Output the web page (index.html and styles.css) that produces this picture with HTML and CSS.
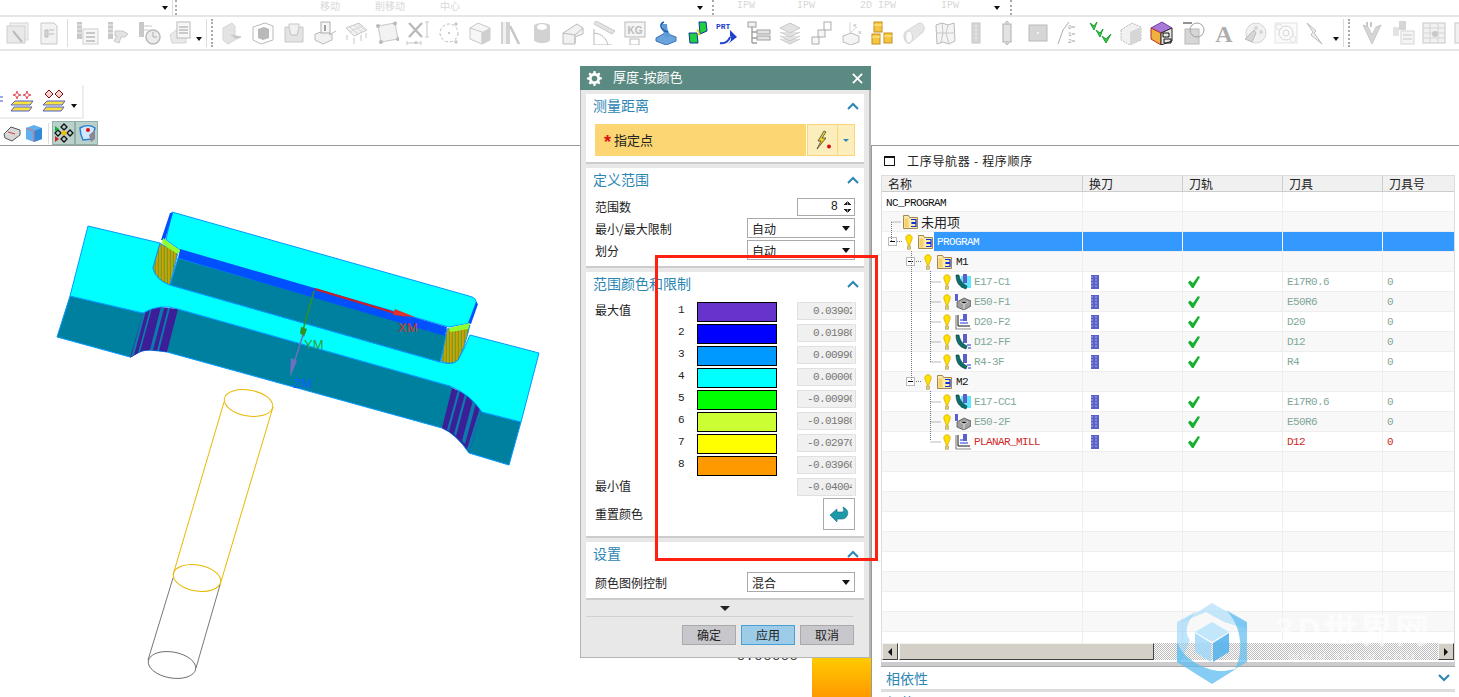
FILE: index.html
```html
<!DOCTYPE html>
<html lang="zh">
<head>
<meta charset="utf-8">
<title>厚度-按颜色</title>
<link rel="stylesheet" href="styles.css">
</head>
<body>
<svg class="defs" width="0" height="0">
  <symbol id="bulb" viewBox="0 0 10 20"><path d="M5 1C2.200 1 1 3 1 5c0 3 2.500 5 3 9h2c.5-4 3-6 3-9 0-2-1.200-4-4-4z" fill="#ffe000" stroke="#d8ac00"/><rect x="3" y="15" width="4" height="4" fill="#e8d060" stroke="#a09a70" stroke-width=".8"/></symbol>
  <symbol id="folder" viewBox="0 0 15 15"><path d="M.5 3.500V1.500h5l1 2h8v11H.5z" fill="#fbeaa8" stroke="#a08850"/><rect x="1.500" y="4.500" width="4" height="9" fill="#f4d070"/><path d="M8 5.500h5v3H9v1h4v3H8" fill="none" stroke="#1030e0" stroke-width="1.200"/></symbol>
  <symbol id="chip" viewBox="0 0 8 14"><rect width="8" height="14" fill="#5a60c8"/><path d="M0 2h8M0 5h8M0 8h8M0 11h8" stroke="#a8b0f0" stroke-dasharray="2 2"/></symbol>
  <symbol id="check" viewBox="0 0 12 12"><path d="M0 6.500l2-2 3 2.500L10 0l2 1-6.500 11h-1.500z" fill="#18b030"/></symbol>
  <symbol id="op-contour" viewBox="0 0 16 16"><path d="M1 1c0 7 3 12 10 14l1-3C8 10 5 7 4 1z" fill="#0a7068" stroke="#063a38" stroke-width=".6"/><rect x="8" y="0" width="4" height="9" fill="#5a60c8"/><path d="M12 11h4M13 14h3" stroke="#1030e0"/></symbol>
  <symbol id="op-contour2" viewBox="0 0 16 16"><rect x="6" y="2" width="10" height="12" fill="#60e8ff"/><path d="M1 1c0 7 3 12 10 14l1-3C8 10 5 7 4 1z" fill="#0a7068" stroke="#063a38" stroke-width=".6"/><rect x="8" y="0" width="4" height="9" fill="#5a60c8"/></symbol>
  <symbol id="op-cavity" viewBox="0 0 16 16"><rect x="0" y="0" width="3" height="7" fill="#5a60c8"/><path d="M2 8l7-4 7 3v5l-7 4-7-3z" fill="#a0a0a0" stroke="#404040" stroke-width=".7"/><path d="M5 8l4 2 4-2M9 10v5" stroke="#e0e0e0"/></symbol>
  <symbol id="op-planar" viewBox="0 0 16 16"><path d="M1 1v14h15" fill="none" stroke="#888" stroke-width="1.200"/><path d="M3 1v11h12" fill="none" stroke="#111"/><rect x="8" y="0" width="4" height="7" fill="#5a60c8"/><path d="M5 6h3M5 9h8" stroke="#1030e0"/></symbol>
  <symbol id="chev-up" viewBox="0 0 12 8"><path d="M1 7l5-5 5 5" fill="none" stroke="#2c86b4" stroke-width="2"/></symbol>
  <symbol id="chev-down" viewBox="0 0 12 8"><path d="M1 1l5 5 5-5" fill="none" stroke="#2c86b4" stroke-width="2"/></symbol>
</svg>

<header class="toolbars">
  <div class="row-top">
    <div class="top-seg top-a"><i class="drop"></i></div>
    <div class="top-seg top-b">
      <span class="faint w-move">移动</span><span class="faint w-cut">削移动</span><span class="faint w-center">中心</span><i class="drop"></i>
    </div>
    <div class="top-seg top-c">
      <span class="faint ipw w-ipw1">IPW</span><span class="faint ipw w-ipw2">IPW</span><span class="faint ipw w-ipw3">2D IPW</span><span class="faint ipw w-ipw4">IPW</span><i class="drop"></i>
    </div>
    <div class="top-seg top-d"></div>
  </div>
  <div class="row-main">
    <svg class="ti g" viewBox="0 0 24 24"><rect x="5" y="2" width="18" height="17" fill="#eee" stroke="#ccc"/><rect x="2" y="5" width="18" height="17" fill="#e4e4e4" stroke="#c4c4c4"/><path d="M8 10l9 11" stroke="#aaa" stroke-width="2"/></svg>
    <svg class="ti g" viewBox="0 0 24 24"><path d="M5 2h13l3 3v18H5z" fill="#f0f0f0" stroke="#bbb"/><path d="M9 9h3v7H9zM13 9h5M13 13h5" stroke="#aaa" fill="#ccc"/></svg>
    <i class="vsep"></i>
    <svg class="ti g" viewBox="0 0 24 24"><rect x="2" y="1" width="5" height="17" fill="#bbb"/><path d="M2 4h5M2 8h5M2 12h5" stroke="#eee"/><rect x="8" y="8" width="15" height="15" fill="#f4f4f4" stroke="#c4c4c4"/><path d="M11 12h9M11 16h9M11 20h9" stroke="#bbb" stroke-width="2"/></svg>
    <svg class="ti g" viewBox="0 0 24 24"><rect x="2" y="1" width="5" height="17" fill="#bbb"/><path d="M2 4h5M2 8h5M2 12h5" stroke="#eee"/><path d="M9 10h8l5 3-3 3h-4l-2 6-5-2 3-5H9z" fill="#ddd" stroke="#bbb"/></svg>
    <svg class="ti g" viewBox="0 0 24 24"><rect x="2" y="1" width="5" height="15" fill="#bbb"/><path d="M7 5h8M7 9h5" stroke="#bbb"/><circle cx="16" cy="16" r="7" fill="#e8e8e8" stroke="#aaa" stroke-width="1.500"/><path d="M16 11v5h4" stroke="#999" fill="none"/></svg>
    <svg class="ti g" viewBox="0 0 24 24"><path d="M2 14l6-5 10 5v8H4z" fill="#e4e4e4" stroke="#ccc"/><rect x="9" y="1" width="13" height="16" fill="#f6f6f6" stroke="#aaa"/><path d="M11 6h9M11 9h9M11 12h9" stroke="#aaa" stroke-width="1.400"/></svg>
    <i class="drop tool-drop"></i><i class="vsep vsep-b"></i><i class="grip grip-b"></i>
    <svg class="ti g" viewBox="0 0 24 24"><path d="M3 7l9-5 3 3v14l-7 4-5-4z" fill="#ddd" stroke="#ccc"/><path d="M11 14l10 2-5 2" fill="#bbb" stroke="#bbb"/></svg>
    <svg class="ti g" viewBox="0 0 24 24"><path d="M2 6l12-4 8 3v14l-12 4-8-4z" fill="none" stroke="#aaa"/><path d="M7 8l6-2 5 2v9l-6 2-5-2z" fill="#a8a8a8"/></svg>
    <svg class="ti g" viewBox="0 0 24 24"><path d="M3 6h4l2 8h6l2-8h4v15H3z" fill="#ddd" stroke="#bbb"/><path d="M7 3h10v3l-2 8H9L7 6z" fill="#eee" stroke="#bbb"/></svg>
    <svg class="ti g" viewBox="0 0 24 24"><path d="M2 13l9-3 8 3v6l-9 4-8-4z" fill="#eee" stroke="#aaa"/><rect x="8" y="1" width="9" height="11" fill="#f4f4f4" stroke="#999"/><path d="M12 4v6" stroke="#888" stroke-width="2"/><path d="M16 14l7-4" stroke="#aaa"/></svg>
    <svg class="ti g" viewBox="0 0 24 24"><path d="M2 7l13-5 8 7-13 6z" fill="#eee" stroke="#bbb"/><path d="M6 6l8 7M10 4l8 7M14 3l6 6M5 11l13-6" stroke="#ccc"/><path d="M3 14v5M10 17v6M17 14v6M22 12v5" stroke="#bbb"/></svg>
    <svg class="ti g" viewBox="0 0 24 24"><path d="M3 5l17-3 3 16-17 3z" fill="#f0f0f0" stroke="#bbb"/><circle cx="3" cy="5" r="2" fill="#aaa"/><circle cx="20" cy="2.500" r="2" fill="#aaa"/><circle cx="23" cy="18" r="2" fill="#aaa"/><circle cx="6" cy="21" r="2" fill="#aaa"/></svg>
    <svg class="ti g" viewBox="0 0 24 24"><path d="M3 2l13 14M16 2L3 16" stroke="#aaa" stroke-width="2.400"/><path d="M19 1h4M21 1v15M19 16h4M1 20v4M15 20v4M1 22h14" stroke="#bbb"/><text x="8" y="23" class="svg-small">x</text></svg>
    <svg class="ti g" viewBox="0 0 24 24"><circle cx="12" cy="12" r="9" fill="none" stroke="#aaa" stroke-dasharray="3 2"/><circle cx="12" cy="12" r="1" fill="#aaa"/><path d="M19 1v4M17 3h4M19 19v4M17 21h4" stroke="#aaa"/></svg>
    <svg class="ti g" viewBox="0 0 24 24"><path d="M2 7l8-5 12 5v12l-8 4-12-5z" fill="#f4f4f4" stroke="#bbb"/><path d="M14 11l8-4v12l-8 4z" fill="#c4c4c4"/><path d="M2 7l12 4v12" fill="none" stroke="#bbb"/></svg>
    <svg class="ti g" viewBox="0 0 24 24"><rect x="2" y="1" width="9" height="22" fill="#c8c8c8"/><rect x="4" y="1" width="3" height="22" fill="#eee"/><path d="M11 5l9 18" stroke="#bbb" stroke-width="2.500"/></svg>
    <svg class="ti g" viewBox="0 0 24 24"><path d="M4 5c0-4 16-4 16 0v14c0 4-16 4-16 0z" fill="#c8c8c8"/><ellipse cx="12" cy="6" rx="5" ry="3" fill="#fff"/></svg>
    <svg class="ti g" viewBox="0 0 24 24"><path d="M2 12l14-9 6 4v6l-8 3v7H2z" fill="#eee" stroke="#aaa"/><path d="M2 12l12 2v8M14 14l8-7" fill="none" stroke="#aaa"/></svg>
    <svg class="ti g" viewBox="0 0 24 24"><path d="M4 0l19 10-3 3L2 3z" fill="#ddd" stroke="#bbb"/><path d="M2 8v16h18M2 12c8 1 12 5 14 12" fill="none" stroke="#aaa"/></svg>
    <svg class="ti g" viewBox="0 0 24 24"><rect x="2" y="1" width="20" height="15" fill="#f2f2f2" stroke="#aaa"/><text x="12" y="13" class="svg-kg">KG</text><rect x="7" y="18" width="9" height="6" fill="none" stroke="#aaa"/></svg>
    <svg class="ti" viewBox="0 0 24 24"><path d="M2 17l9-5 11 4v4l-10 4-10-4z" fill="#6aa4dc" stroke="#3b70b8"/><path d="M8 3c0 6 2 9 4 14l5-3c-3-3-4-6-4-11z" fill="#5c9bd8"/><path d="M10 1C5 3 6 9 14 11" fill="none" stroke="#1c5cb0" stroke-width="1.600"/></svg>
    <svg class="ti" viewBox="0 0 24 24"><path d="M14 1h7l1 9-7 3z" fill="#20d040" stroke="#1030a0"/><path d="M4 12h8l1 10H5z" fill="#20d040" stroke="#1030a0"/><path d="M13 12l2 2M12 9l2 1" stroke="#e0e000" stroke-width="2"/></svg>
    <svg class="ti" viewBox="0 0 24 24"><text x="0" y="8" class="svg-prt">PRT</text><path d="M14 9l7 7-9 7c3-3 4-5 2-8z" fill="#2040d0"/><path d="M4 22c5 1 9-2 10-6" fill="none" stroke="#2040d0" stroke-width="2"/></svg>
    <svg class="ti g" viewBox="0 0 24 24"><rect x="1" y="1" width="8" height="5" fill="#eee" stroke="#888"/><path d="M5 6v16M5 11h5M5 17h5M5 22h5" stroke="#888" stroke-width="1.400"/><rect x="10" y="9" width="13" height="4" fill="#ddd" stroke="#888"/><rect x="10" y="15" width="13" height="4" fill="#ddd" stroke="#888"/></svg>
    <svg class="ti g" viewBox="0 0 24 24"><path d="M2 7l10-5 10 5-10 5zM2 11l10 5 10-5M2 15l10 5 10-5M2 18l10 5 10-5" fill="#ddd" stroke="#bbb"/></svg>
    <svg class="ti g" viewBox="0 0 24 24"><rect x="15" y="1" width="7" height="8" fill="#fff" stroke="#999"/><rect x="9" y="9" width="7" height="7" fill="#f4f4f4" stroke="#999"/><rect x="3" y="16" width="7" height="7" fill="#f4f4f4" stroke="#999"/></svg>
    <svg class="ti g" viewBox="0 0 24 24"><path d="M3 15l8-3 8 3v6l-8 3-8-3z" fill="#f2f2f2" stroke="#aaa"/><path d="M10 1v11l7-6" stroke="#ccc" fill="none"/><text x="13" y="6" class="svg-small">x</text><text x="18" y="13" class="svg-small">x</text></svg>
    <svg class="ti" viewBox="0 0 24 24"><rect x="3" y="1" width="8" height="10" fill="#f6c640" stroke="#c09020"/><rect x="1" y="13" width="8" height="10" fill="#f6c640" stroke="#c09020"/><rect x="13" y="12" width="8" height="10" fill="#f6c640" stroke="#c09020"/><path d="M3 4h8M1 16h8M13 15h8" stroke="#fff0a0"/></svg>
    <svg class="ti g" viewBox="0 0 24 24"><path d="M3 11L17 2c4-1 7 5 4 9L8 22c-4 2-8-6-5-11z" fill="#e0e0e0" stroke="#ccc"/><ellipse cx="7" cy="16" rx="3.500" ry="6" fill="#fafafa" stroke="#ccc"/></svg>
    <svg class="ti g" viewBox="0 0 24 24"><path d="M3 4l6-2 6 2 6-2 1 18-6 3-6-2-6 2z" fill="#f2f2f2" stroke="#aaa"/><path d="M9 2l1 10-2 9M15 4l-2 8 3 11M3 12h19" fill="none" stroke="#bbb"/></svg>
    <svg class="ti g" viewBox="0 0 24 24"><rect x="8" y="2" width="8" height="20" fill="#ccc" stroke="#bbb"/><path d="M12 4v16" stroke="#eee" stroke-dasharray="2 2"/></svg>
    <svg class="ti g" viewBox="0 0 24 24"><rect x="8" y="3" width="8" height="18" fill="#ddd" stroke="#999"/><path d="M12 0v3M12 21v3M10 2l2-2 2 2M10 22l2 2 2-2" fill="none" stroke="#aaa"/></svg>
    <svg class="ti g" viewBox="0 0 24 24"><rect x="3" y="4" width="18" height="16" fill="#ccc" stroke="#aaa"/><circle cx="12" cy="12" r="1" fill="#fff"/></svg>
    <svg class="ti g" viewBox="0 0 24 24"><path d="M1 23l5-14 6-8" fill="none" stroke="#999"/><text x="11" y="8" class="svg-small">0=</text><text x="11" y="15" class="svg-small">1=</text><text x="11" y="22" class="svg-small">2=</text></svg>
    <svg class="ti" viewBox="0 0 24 24"><path d="M2 2l4 7 3-8-3 4zM8 9l4 7 3-8-3 4zM14 15l4 7 5-9-5 5z" fill="#38c848" stroke="#20a030"/></svg>
    <svg class="ti g" viewBox="0 0 24 24"><path d="M2 9l11-7 9 4v13l-11 5-9-5z" fill="#eee" stroke="#aaa" stroke-dasharray="2 1"/><path d="M11 11l11-5v13l-11 5z" fill="#ccc"/></svg>
    <svg class="ti" viewBox="0 0 24 24"><path d="M1 7l11-6 10 6-11 5z" fill="#a878d8" stroke="#7040a0"/><path d="M1 7l10 5v12L1 18z" fill="#f0b040" stroke="#c02820"/><path d="M11 12l11-5v13l-11 4z" fill="#e8e8e8" stroke="#222"/><path d="M13 12h6v4h-6zM14 18h7v4h-7z" fill="none" stroke="#111"/></svg>
    <svg class="ti g" viewBox="0 0 24 24"><rect x="4" y="8" width="14" height="15" fill="#ccc" stroke="#aaa"/><circle cx="16" cy="9" r="7" fill="none" stroke="#888"/><path d="M2 2h9" stroke="#777" stroke-width="2"/></svg>
    <svg class="ti g" viewBox="0 0 24 24"><text x="12" y="21" class="svg-a">A</text></svg>
    <svg class="ti g" viewBox="0 0 24 24"><circle cx="13" cy="12" r="10" fill="#eee" stroke="#ccc"/><circle cx="13" cy="7" r="2" fill="#ccc"/><circle cx="18" cy="11" r="2" fill="#ccc"/><path d="M2 18l9-9 2 3-4 9z" fill="#ccc" stroke="#aaa"/></svg>
    <svg class="ti g" viewBox="0 0 24 24"><rect x="1" y="2" width="22" height="20" fill="#fafafa" stroke="#ddd"/><circle cx="12" cy="12" r="7" fill="none" stroke="#ccc"/><circle cx="12" cy="12" r="3" fill="none" stroke="#ccc"/><circle cx="5" cy="6" r="3" fill="none" stroke="#ddd"/><circle cx="19" cy="18" r="3" fill="none" stroke="#ddd"/></svg>
    <svg class="ti g" viewBox="0 0 24 24"><path d="M2 2l9 8-2 2 8 11-11-9 2-3z" fill="#eee" stroke="#aaa"/></svg>
    <i class="drop tool-drop"></i><i class="vsep vsep-c"></i><i class="grip grip-c"></i>
    <svg class="ti g" viewBox="0 0 24 24"><path d="M3 4l9 19 9-19-5 2-4 8-4-8z" fill="#ccc" stroke="#bbb"/><path d="M7 1v5M11 1v5" stroke="#bbb" stroke-width="2"/></svg>
    <svg class="ti g" viewBox="0 0 24 24"><rect x="8" y="0" width="7" height="9" fill="#ccc"/><rect x="2" y="6" width="6" height="9" fill="#ddd"/><rect x="10" y="10" width="13" height="13" fill="#f2f2f2" stroke="#ccc"/><path d="M12 14h9M12 18h9" stroke="#bbb"/></svg>
    <svg class="ti g" viewBox="0 0 24 24"><rect x="1" y="2" width="22" height="20" fill="#eee" stroke="#bbb"/><path d="M1 7h22M1 12h22M1 17h22M8 2v20M16 2v20" stroke="#ccc"/><circle cx="13" cy="13" r="3" fill="#bbb"/></svg>
    <svg class="ti g" viewBox="0 0 24 24"><rect x="2" y="2" width="12" height="20" fill="#eee" stroke="#bbb"/></svg>
  </div>
  <div class="mini-bar">
    <svg class="mi mi-a" viewBox="0 0 3 24"><path d="M0 9h3M0 13h3" stroke="#4050d0"/></svg>
    <svg class="mi" viewBox="0 0 24 24"><path d="M7 3l1 3 3 1-3 1-1 3-1-3-3-1 3-1zM17 3l1 3 3 1-3 1-1 3-1-3-3-1 3-1z" fill="#fff" stroke="#e03040" stroke-width=".8"/><path d="M5 13h18l-3 4H1zM4 19h18l-3 4H1z" fill="#f8e040" stroke="#5060d0"/></svg>
    <svg class="mi" viewBox="0 0 24 24"><path d="M7 2l4 4-4 4-4-4zM17 2l4 4-4 4-4-4z" fill="#f4d0d0" stroke="#801010"/><path d="M5 13h18l-3 4H1zM4 19h18l-3 4H1z" fill="#f8e040" stroke="#5060d0"/></svg>
    <i class="drop mini-drop"></i>
  </div>
  <div class="view-bar">
    <svg class="vi" viewBox="0 0 20 20"><path d="M2 11l7-7 9 3v5l-8 6-7-3z" fill="#d8d8d8" stroke="#555"/><path d="M6 9l7 2" stroke="#d04040"/></svg>
    <svg class="vi" viewBox="0 0 20 20"><path d="M2 5l8-3 8 3v11l-8 3-8-3z" fill="#60b0f0"/><path d="M10 8l8-3v11l-8 3z" fill="#3088d8"/><path d="M2 5l8 3v11" fill="none" stroke="#e07070"/></svg>
    <i class="vsep vsep-v"></i>
    <span class="toggle"><svg class="vi" viewBox="0 0 20 20"><path d="M10 1l3 3-3 3-3-3zM10 13l3 3-3 3-3-3zM4 7l3 3-3 3-3-3zM16 7l3 3-3 3-3-3z" fill="none" stroke="#111" stroke-width="1.300"/><path d="M10 7l3 3-3 3-3-3z" fill="#f0c000"/><path d="M1 3l4 3-4 3z" fill="#10b040"/><path d="M1 13l4 3-4 3z" fill="#d02020"/></svg></span>
    <span class="toggle"><svg class="vi" viewBox="0 0 20 20"><path d="M3 5c5-3 11-3 15 0l-3 11-9 1C4 13 3 9 3 5z" fill="#d0e8ff" stroke="#3080d0" stroke-width="1.500"/><circle cx="11" cy="7" r="2" fill="#e01010"/><path d="M12 12l6-5v9l-4 3z" fill="#889"/></svg></span>
  </div>
</header>

<div class="workspace">
  <main class="viewport">
    <svg class="model" viewBox="0 146 871 551" width="871" height="551">
      <defs>
        <linearGradient id="legend" x1="0" y1="0" x2="0" y2="1"><stop offset="0" stop-color="#ffcc00"/><stop offset="1" stop-color="#ff9900"/></linearGradient>
        <pattern id="stipple" width="3" height="3" patternUnits="userSpaceOnUse"><rect width="3" height="3" fill="#b8a010"/><rect width="1" height="3" fill="#d0a000"/><rect x="2" width="1" height="3" fill="#70a020"/></pattern>
      </defs>
      <text x="737" y="660" class="legend-num">8.88888</text>
      <rect x="812" y="657" width="59" height="40" fill="url(#legend)"/>
      <g fill="none">
        <g stroke="#e8b800" stroke-width="1">
          <ellipse cx="248.500" cy="403" rx="24.500" ry="13" transform="rotate(10 248.500 403)"/>
          <ellipse cx="197" cy="578" rx="24" ry="13" transform="rotate(10 197 578)"/>
          <path d="M224 402L173 575M273 407L220 585"/>
        </g>
        <g stroke="#555" stroke-width=".8">
          <path d="M173 578L148 660M220 585L196 668"/>
          <ellipse cx="172" cy="665" rx="24" ry="13" transform="rotate(10 172 665)"/>
        </g>
      </g>
      <path d="M70 296L57 337L130 357Q140 350 150 350L167 352L442 428Q456 434 469 453L509 465L521 422L482 412L450 386L178 309L143 313Z" fill="#00809f" stroke="#0099ff"/>
      <path d="M143 313Q150 307 160 307L178 309L167 352Q150 349 142 351L130 358Z" fill="#3c1f98"/>
      <path d="M143 313L146 311L134 355L131 357ZM150 309L152 308L140 352L138 353ZM161 307L164 308L153 350L150 350ZM168 308L170 308L159 351L157 351Z" fill="#0a7cac"/>
      <path d="M452 388Q470 394 482 410L469 452Q456 434 442 428Z" fill="#3c1f98"/>
      <path d="M458 390L460 391L449 431L447 430ZM465 394L467 395L456 436L454 434ZM473 400L476 403L465 444L462 441ZM480 408L482 410L469 452L467 449Z" fill="#0a7cac"/>
      <path d="M88 226L160 243L153 268Q156 280 170 285L440 362Q452 366 458 360Q464 350 470 335L539 353L521 422L482 412Q470 394 450 386L178 309Q160 303 143 313L70 296Z" fill="#00ffff" stroke="#0099ff"/>
      <path d="M178 258L447 335L440 362L170 285Z" fill="#00809f" stroke="#0099ff"/>
      <path d="M160 243L153 268Q156 280 170 285L178 252L163 245Z" fill="url(#stipple)" stroke="#0099ff"/>
      <path d="M447 329L441 361Q452 366 458 360Q464 350 470 325Z" fill="url(#stipple)" stroke="#0099ff"/>
      <path d="M172 212L469 296Q478 298 476 305L470 323L449 327L180 250L166 240Z" fill="#00ffff" stroke="#0099ff"/>
      <path d="M180 249L447 327L445 336L178 258Z" fill="#0050ff"/>
      <path d="M170 213L173 213L165 240L161 240Z" fill="#0050ff"/>
      <path d="M476 302L478 304L471 324L468 323Z" fill="#0050ff"/>
      <path d="M163 238L172 245L180 250L178 254L168 248L162 243Z" fill="#90ff30"/>
      <path d="M449 328L470 323L468 329L450 332Z" fill="#90ff30"/>
      <path d="M315 289L405 316" stroke="#cc2020" stroke-width="2"/>
      <path d="M395 309L415 317L393 315Z" fill="#e03030"/>
      <path d="M314 291L303 330" stroke="#309020" stroke-width="1.500"/>
      <path d="M301 327L307 329L304 337L300 333Z" fill="#309020"/>
      <path d="M303 335L295 360" stroke="#7070b8" stroke-width="1.500"/>
      <path d="M291 358L297 361L290 377Z" fill="#7070c0"/>
      <text x="398" y="332" class="axis axis-x">XM</text>
      <text x="304" y="349" class="axis axis-y">YM</text>
      <text x="293" y="388" class="axis axis-z">ZM</text>
    </svg>
  </main>

  <aside class="nav">
    <div class="nav-head">
      <i class="win-box"></i><span class="nav-title">工序导航器 - 程序顺序</span>
    </div>
    <div class="table">
      <div class="tr th"><span>名称</span><span>换刀</span><span>刀轨</span><span>刀具</span><span>刀具号</span></div>
      <div class="tr"><span class="name mono lvl0 dark">NC_PROGRAM</span><span></span><span></span><span></span><span></span></div>
      <div class="tr alt"><span class="name lvl-unused"><svg class="fd"><use href="#folder"/></svg><span class="cjk">未用项</span></span><span></span><span></span><span></span><span></span></div>
      <div class="tr sel"><span class="name lvl-program"><i class="tog"></i><svg class="bl"><use href="#bulb"/></svg><svg class="fd"><use href="#folder"/></svg><span class="mono sel-label">PROGRAM</span></span><span></span><span></span><span></span><span></span></div>
      <div class="tr alt"><span class="name lvl-group"><i class="tog"></i><svg class="bl"><use href="#bulb"/></svg><svg class="fd"><use href="#folder"/></svg><span class="mono dark">M1</span></span><span></span><span></span><span></span><span></span></div>
      <div class="tr"><span class="name lvl-op"><svg class="bl"><use href="#bulb"/></svg><svg class="op"><use href="#op-contour2"/></svg><span class="mono ok">E17-C1</span></span><span><svg class="ch"><use href="#chip"/></svg></span><span><svg class="ck"><use href="#check"/></svg></span><span class="mono ok">E17R0.6</span><span class="mono ok">0</span></div>
      <div class="tr alt"><span class="name lvl-op"><svg class="bl"><use href="#bulb"/></svg><svg class="op"><use href="#op-cavity"/></svg><span class="mono ok">E50-F1</span></span><span><svg class="ch"><use href="#chip"/></svg></span><span><svg class="ck"><use href="#check"/></svg></span><span class="mono ok">E50R6</span><span class="mono ok">0</span></div>
      <div class="tr"><span class="name lvl-op"><svg class="bl"><use href="#bulb"/></svg><svg class="op"><use href="#op-planar"/></svg><span class="mono ok">D20-F2</span></span><span><svg class="ch"><use href="#chip"/></svg></span><span><svg class="ck"><use href="#check"/></svg></span><span class="mono ok">D20</span><span class="mono ok">0</span></div>
      <div class="tr alt"><span class="name lvl-op"><svg class="bl"><use href="#bulb"/></svg><svg class="op"><use href="#op-contour"/></svg><span class="mono ok">D12-FF</span></span><span><svg class="ch"><use href="#chip"/></svg></span><span><svg class="ck"><use href="#check"/></svg></span><span class="mono ok">D12</span><span class="mono ok">0</span></div>
      <div class="tr"><span class="name lvl-op"><svg class="bl"><use href="#bulb"/></svg><svg class="op"><use href="#op-contour"/></svg><span class="mono ok">R4-3F</span></span><span><svg class="ch"><use href="#chip"/></svg></span><span><svg class="ck"><use href="#check"/></svg></span><span class="mono ok">R4</span><span class="mono ok">0</span></div>
      <div class="tr alt"><span class="name lvl-group"><i class="tog"></i><svg class="bl"><use href="#bulb"/></svg><svg class="fd"><use href="#folder"/></svg><span class="mono dark">M2</span></span><span></span><span></span><span></span><span></span></div>
      <div class="tr"><span class="name lvl-op"><svg class="bl"><use href="#bulb"/></svg><svg class="op"><use href="#op-contour2"/></svg><span class="mono ok">E17-CC1</span></span><span><svg class="ch"><use href="#chip"/></svg></span><span><svg class="ck"><use href="#check"/></svg></span><span class="mono ok">E17R0.6</span><span class="mono ok">0</span></div>
      <div class="tr alt"><span class="name lvl-op"><svg class="bl"><use href="#bulb"/></svg><svg class="op"><use href="#op-cavity"/></svg><span class="mono ok">E50-2F</span></span><span><svg class="ch"><use href="#chip"/></svg></span><span><svg class="ck"><use href="#check"/></svg></span><span class="mono ok">E50R6</span><span class="mono ok">0</span></div>
      <div class="tr"><span class="name lvl-op"><svg class="bl"><use href="#bulb"/></svg><svg class="op"><use href="#op-planar"/></svg><span class="mono bad">PLANAR_MILL</span></span><span><svg class="ch"><use href="#chip"/></svg></span><span><svg class="ck"><use href="#check"/></svg></span><span class="mono bad">D12</span><span class="mono bad">0</span></div>
      <div class="tr alt"><span></span><span></span><span></span><span></span><span></span></div>
      <div class="tr"><span></span><span></span><span></span><span></span><span></span></div>
      <div class="tr alt"><span></span><span></span><span></span><span></span><span></span></div>
      <div class="tr"><span></span><span></span><span></span><span></span><span></span></div>
      <div class="tr alt"><span></span><span></span><span></span><span></span><span></span></div>
      <div class="tr"><span></span><span></span><span></span><span></span><span></span></div>
      <div class="tr alt"><span></span><span></span><span></span><span></span><span></span></div>
      <div class="tr"><span></span><span></span><span></span><span></span><span></span></div>
      <div class="tr alt"><span></span><span></span><span></span><span></span><span></span></div>
      <div class="tr tr-fill"><span></span><span></span><span></span><span></span><span></span></div>
      <svg class="tree-lines" width="80" height="270" viewBox="881 176 80 270">
        <path d="M891.500 222V241M891.500 222H901M897 241.500H903M911.500 251V381M916 261.500H922M916 381.500H922M930.500 271V362M930.500 391V441M930.500 282H941M930.500 302H941M930.500 322H941M930.500 342H941M930.500 362H941M930.500 402H941M930.500 422H941M930.500 442H941" stroke="#777" stroke-dasharray="1 1" fill="none"/>
      </svg>
      <div class="hscroll">
        <span class="sb-btn"><i class="arrow-l"></i></span><span class="sb-thumb"></span><span class="sb-track"></span><span class="sb-btn"><i class="arrow-r"></i></span>
      </div>
    </div>
    <div class="nav-foot">
      <div class="fold"><span>相依性</span><svg class="chev"><use href="#chev-down"/></svg></div>
      <div class="fold fold-next"><span>细节</span></div>
    </div>
  </aside>
</div>

<section class="dialog">
  <div class="dlg-title">
    <svg class="gear" viewBox="0 0 16 16"><path d="M7 0h2l.4 2.200 1.500.6L12.800 1.600l1.500 1.500-1.200 1.900.6 1.500 2.200.4v2l-2.200.4-.6 1.500 1.200 1.900-1.500 1.500-1.900-1.200-1.500.6L9 16H7l-.4-2.200-1.500-.6-1.900 1.200-1.500-1.500 1.200-1.900-.6-1.500L0 9V7l2.200-.4.6-1.500L1.600 3.200l1.500-1.500L5 2.800l1.500-.6z" fill="#fff"/><circle cx="8" cy="8" r="3" fill="#5b8a82"/></svg>
    <span class="dlg-name">厚度-按颜色</span>
    <svg class="dlg-x" viewBox="0 0 12 12"><path d="M1 1l10 10M11 1L1 11" stroke="#fff" stroke-width="2"/></svg>
  </div>
  <div class="dlg-body">
    <div class="sect s1">
      <div class="sect-head"><span>测量距离</span><svg class="chev"><use href="#chev-up"/></svg></div>
      <div class="point-row">
        <div class="point-label"><span class="star">*</span><span class="point-text">指定点</span></div>
        <div class="point-btn"><svg class="bolt" viewBox="0 0 20 20"><path d="M11 1L5 11h3l-4 8 9-11H9l4-6z" fill="#f4d020" stroke="#444" stroke-width=".8"/><circle cx="16" cy="16.500" r="2" fill="#d81010"/></svg></div>
        <div class="point-drop"><i class="drop-blue"></i></div>
      </div>
    </div>
    <div class="sect s2">
      <div class="sect-head"><span>定义范围</span><svg class="chev"><use href="#chev-up"/></svg></div>
      <div class="line l-spin"><span>范围数</span><div class="spin"><span>8</span><i class="spin-arrows"></i></div></div>
      <div class="line"><span>最小/最大限制</span><div class="select"><span>自动</span><i class="drop dk"></i></div></div>
      <div class="line"><span>划分</span><div class="select"><span>自动</span><i class="drop dk"></i></div></div>
    </div>
    <div class="sect s3">
      <div class="sect-head"><span>范围颜色和限制</span><svg class="chev"><use href="#chev-up"/></svg></div>
      <div class="ranges">
        <span class="rl">最大值</span><span class="rn">1</span><i class="sw c1"></i><span class="fld"><b>0.03902</b></span>
        <span></span><span class="rn">2</span><i class="sw c2"></i><span class="fld"><b>0.01980</b></span>
        <span></span><span class="rn">3</span><i class="sw c3"></i><span class="fld"><b>0.00990</b></span>
        <span></span><span class="rn">4</span><i class="sw c4"></i><span class="fld"><b>0.00000</b></span>
        <span></span><span class="rn">5</span><i class="sw c5"></i><span class="fld"><b>-0.00990</b></span>
        <span></span><span class="rn">6</span><i class="sw c6"></i><span class="fld"><b>-0.01980</b></span>
        <span></span><span class="rn">7</span><i class="sw c7"></i><span class="fld"><b>-0.02970</b></span>
        <span></span><span class="rn">8</span><i class="sw c8"></i><span class="fld"><b>-0.03960</b></span>
        <span class="rl">最小值</span><span></span><span></span><span class="fld"><b>-0.04004</b></span>
      </div>
      <div class="reset"><span>重置颜色</span><button class="reset-btn"><svg class="ret" viewBox="0 0 20 16"><path d="M1 9l7-6v3h5c2 0 2-2 1-5 4 2 6 5 4 9-1 2-3 3-5 3H8v3z" fill="#1c9aa8" stroke="#0c6a80" stroke-width=".6"/></svg></button></div>
    </div>
    <div class="sect s4">
      <div class="sect-head"><span>设置</span><svg class="chev"><use href="#chev-up"/></svg></div>
      <div class="line"><span>颜色图例控制</span><div class="select"><span>混合</span><i class="drop dk"></i></div></div>
    </div>
    <div class="more"><i class="more-arrow"></i></div>
    <div class="actions"><button class="btn">确定</button><button class="btn primary">应用</button><button class="btn">取消</button></div>
  </div>
</section>

<div class="redbox"></div>

<svg class="watermark" viewBox="0 0 72 82" width="72" height="82">
  <path d="M36 1L71 21v6L48 20 30 10 6 20z" fill="#a8dcf8" opacity=".65"/>
  <path d="M50 8L71 20v40l-12 7C68 50 66 24 50 8z" fill="#5cbcf0" opacity=".7"/>
  <path d="M1 20l20-11C10 20 8 30 14 38L4 62 1 60z" fill="#88d0f8" opacity=".55"/>
  <path d="M1 60V40C6 56 30 70 48 69l12-2-24 15z" fill="#5cbcf0" opacity=".75"/>
  <path d="M36 20L53 30 36 40 19 30z" fill="#bce4fa" opacity=".9"/>
  <path d="M19 31L35 41V60L19 50z" fill="#a0d8f8" opacity=".85"/>
  <path d="M37 41L53 31V50L37 60z" fill="#58b4ec" opacity=".9"/>
</svg>
<div class="wm-text"><span class="wm-big">3D世界网</span><span class="wm-small">WWW.3DSW.COM</span></div>
</body>
</html>
```
FILE: styles.css
```css
* { box-sizing: border-box; }
html, body { margin: 0; height: 100%; }
body {
  position: relative;
  width: 1459px;
  height: 697px;
  overflow: hidden;
  background: #fff;
  font-family: "Noto Sans CJK SC", "Liberation Sans", sans-serif;
  font-size: 13px;
  color: #222;
  display: flex;
  flex-direction: column;
}
i { display: block; font-style: normal; }
.defs { position: absolute; }

/* toolbars */
.toolbars { height: 146px; flex: none; border-bottom: 1px solid #9a9a9a; }
.row-top { height: 17px; display: flex; border-bottom: 2px solid #e6e6e6; }
.top-seg { height: 15px; display: flex; align-items: center; }
.top-a { width: 173px; justify-content: flex-end; padding-right: 4px; border-right: 1px solid #ddd; }
.top-b { width: 535px; padding-left: 143px; }
.top-c { width: 296px; padding-left: 23px; }
.top-d { flex: 1; }
.top-b, .top-c, .top-d { border-left: 2px dotted #aaa; margin-left: 2px; }
.faint { font-size: 10px; color: #d8d8d8; line-height: 12px; height: 15px; }
.ipw { font-family: "Liberation Mono", monospace; font-size: 10px; }
.w-move { width: 55px; }
.w-cut { width: 65px; }
.w-center { width: 257px; }
.w-ipw1 { width: 60px; }
.w-ipw2 { width: 63px; }
.w-ipw3 { width: 81px; }
.w-ipw4 { width: 53px; }
.drop { width: 0; height: 0; border-left: 3.500px solid transparent; border-right: 3.500px solid transparent; border-top: 4px solid #111; }

.row-main { height: 34px; display: flex; align-items: center; padding-left: 5px; border-bottom: 2px solid #e6e6e6; gap: 7px; overflow: hidden; }
.ti { width: 24px; height: 24px; flex: none; }
.ti.g { opacity: .8; }
.vsep { width: 1px; height: 28px; background: #ddd; flex: none; }
.tool-drop { margin-top: 12px; flex: none; margin-left: -3px; }
.vsep-b { margin-left: -3px; }
.vsep-c { margin-left: -3px; }
.grip { width: 2px; height: 28px; border-left: 2px dotted #aaa; flex: none; margin-left: -3px; }
.grip-c { margin-right: 3px; }
.svg-small { font: 6px "Liberation Mono", monospace; fill: #888; }
.svg-kg { font: bold 10px "Liberation Sans", sans-serif; fill: #aaa; text-anchor: middle; }
.svg-prt { font: bold 8px "Liberation Mono", monospace; fill: #2040d0; }
.svg-a { font: bold 24px "Liberation Serif", serif; fill: #999; text-anchor: middle; }

.mini-bar { width: 84px; height: 34px; margin-top: 34px; display: flex; align-items: center; gap: 8px; border-right: 2px solid #eee; border-bottom: 2px solid #eee; padding-bottom: 2px; }
.mi { width: 24px; height: 24px; flex: none; }
.mi-a { width: 3px; margin-right: -1px; }
.mini-drop { margin-top: 12px; margin-left: -3px; }
.view-bar { height: 24px; margin-top: 2px; display: flex; align-items: center; padding-left: 2px; gap: 2px; }
.vi { width: 20px; height: 20px; flex: none; }
.vsep-v { height: 21px; margin: 0 3px 0 2px; }
.toggle { width: 23px; height: 24px; display: flex; align-items: center; justify-content: center; background: #b9d0cb; border: 1px solid #8fb0aa; margin-left: -2px; }

/* layout */
.workspace { flex: 1; display: flex; min-height: 0; }
.viewport { width: 872px; flex: none; border-right: 1px solid #999; overflow: hidden; }
.model { display: block; }
.legend-num { font: 13px "Liberation Mono", monospace; fill: #222; letter-spacing: 1px; }
.axis { font: 13px "Liberation Sans", sans-serif; }
.axis-x { fill: #d03030; }
.axis-y { fill: #30a030; }
.axis-z { fill: #1060ff; }

/* navigator */
.nav { flex: 1; padding-left: 9px; padding-top: 4px; min-width: 0; display: flex; flex-direction: column; overflow: hidden; }
.nav-head { height: 25px; flex: none; display: flex; align-items: center; gap: 12px; padding-left: 3px; padding-bottom: 4px; }
.win-box { width: 11px; height: 10px; border: 1px solid #111; border-top-width: 2px; }
.nav-title { font-size: 12px; color: #222; letter-spacing: .7px; }
.table { position: relative; width: 574px; flex: none; border: 1px solid #ddd; border-bottom: none; height: 487px; display: flex; flex-direction: column; background: #fff; }
.tr { height: 20px; flex: none; display: grid; grid-template-columns: 201px 100px 100px 100px 1fr; border-bottom: 1px solid #eee; }
.tr > span { border-right: 1px solid #eee; display: flex; align-items: center; padding-left: 3px; min-width: 0; }
.tr > span:last-child { border-right: none; }
.th { height: 16px; background: #f0f0f0; border-bottom: 1px solid #ccc; }
.th > span { border-right: 1px solid #ccc; padding-left: 6px; font-size: 12px; color: #222; line-height: 15px; }
.alt { background: #f8f8f8; }
.tr-fill { flex: 1; height: auto; border-bottom: none; }
.mono { font-family: "Liberation Mono", monospace; font-size: 11px; letter-spacing: -.6px; padding-top: 1px; }
.dark { color: #111; }
.ok { color: #7fa898; }
.bad { color: #d02828; }
.tr > .mono { padding-left: 4px; }
.tr > .name { gap: 3px; padding-left: 0; }
.tr > .lvl0 { padding-left: 4px; padding-top: 2px; }
.tr > .lvl-unused { padding-left: 21px; gap: 3px; }
.cjk { font-size: 13px; color: #222; }
.tr > .lvl-program { padding-left: 6px; gap: 0; padding-right: 0; border-right: none; }
.lvl-program .tog { margin-right: 7px; }
.lvl-program .fd { margin: 0 1px 0 4px; }
.sel > span:not(.name) { background: #3399ff; border-right-color: #fff; }
.sel-label { flex: 1; height: 19px; line-height: 19px; background: #3399ff; color: #fff; padding-left: 3px; border-right: 1px solid #fff; }
.tr > .lvl-group { padding-left: 24px; gap: 0; }
.lvl-group .tog { margin-right: 8px; }
.lvl-group .fd { margin: 0 4px; }
.tr > .lvl-op { padding-left: 60px; gap: 3px; }
.tog { width: 9px; height: 9px; border: 1px solid #bbb; background: linear-gradient(#111, #111) center / 5px 1px no-repeat #fff; flex: none; }
.fd { width: 15px; height: 15px; flex: none; }
.bl { width: 10px; height: 16px; flex: none; }
.op { width: 16px; height: 16px; flex: none; }
.ch { width: 8px; height: 14px; margin-left: 5px; flex: none; }
.ck { width: 12px; height: 12px; margin-left: 2px; flex: none; }
.tree-lines { position: absolute; left: -1px; top: 0; pointer-events: none; }
.hscroll { height: 17px; display: flex; align-items: stretch; flex: none; margin-bottom: 2px; }
.sb-thumb { width: 255px; background: #d4d0c8; border: 1px solid; border-color: #f4f2ec #444 #444 #f4f2ec; margin-left: 1px; }
.sb-track { flex: 1; background: repeating-conic-gradient(#bcbcbc 0 25%, #fff 0 50%) 0 0 / 2px 2px; }
.sb-btn { width: 16px; flex: none; background: #d4d0c8; border: 1px solid; border-color: #f4f2ec #444 #444 #f4f2ec; display: flex; align-items: center; justify-content: center; }
.arrow-r { border-top: 4px solid transparent; border-bottom: 4px solid transparent; border-left: 4px solid #111; }
.arrow-l { border-top: 4px solid transparent; border-bottom: 4px solid transparent; border-right: 4px solid #111; }
.nav-foot { flex: none; background: linear-gradient(#aaa, #aaa) 0 0 / 100% 1px no-repeat; border-top: 4px solid #ccc; width: 574px; }
.fold { height: 26px; display: flex; align-items: center; justify-content: space-between; padding: 0 5px; font-size: 14px; color: #2c86b4; border-bottom: 3px solid #ddd; }
.fold-next { height: 24px; border: none; align-items: flex-start; }
.chev { width: 12px; height: 8px; flex: none; }

/* dialog */
.dialog { position: absolute; left: 580px; top: 66px; width: 291px; height: 592px; background: #e8e8e8; border: 1px solid #b4b4b4; border-top: none; border-right-width: 2px; }
.dlg-title { height: 24px; background: #5b8a82; display: flex; align-items: center; padding: 0 8px 0 7px; color: #fff; margin-right: -2px; margin-left: -1px; }
.gear { width: 15px; height: 15px; flex: none; }
.dlg-name { margin-left: 11px; font-size: 13px; flex: 1; padding-bottom: 3px; }
.dlg-x { width: 11px; height: 11px; }
.dlg-body { padding: 4px 5px 0; }
.sect { background: #fff; border-bottom: 2px solid #ccc; margin-bottom: 4px; width: 278px; }
.sect-head { height: 26px; display: flex; align-items: center; justify-content: space-between; padding: 0 5px 4px 7px; font-size: 14px; color: #2c86b4; }
.sect-head .chev { margin-top: 1px; }
.s1 { height: 70px; }
.s2 { height: 100px; }
.s3 { height: 266px; margin-bottom: 4px; }
.s4 { height: 58px; margin-bottom: 0; }
.point-row { margin: 4px 9px 0; display: flex; height: 32px; gap: 1px; }
.point-label { width: 211px; background: #fbd672; display: flex; align-items: center; gap: 3px; padding-left: 9px; }
.point-text { padding-bottom: 2px; }
.star { color: #e01010; font-size: 18px; line-height: 20px; height: 16px; font-family: "Liberation Sans", sans-serif; font-weight: bold; }
.point-btn { width: 31px; background: #fbeebc; border: 1px solid #fbd672; display: flex; align-items: center; justify-content: center; }
.bolt { width: 20px; height: 20px; }
.point-drop { width: 17px; margin-left: -1px; background: #fbeebc; border: 1px solid #fbd672; border-left: none; display: flex; align-items: center; justify-content: center; }
.drop-blue { border-left: 3px solid transparent; border-right: 3px solid transparent; border-top: 3px solid #2c86b4; }
.line { display: flex; justify-content: space-between; align-items: center; padding: 0 9px; height: 20px; margin-bottom: 2px; font-size: 12px; }
.s2 .sect-head { margin-bottom: 3px; }
.s4 .sect-head { margin-bottom: 4px; }
.l-spin { height: 19px; margin-bottom: 2px; }
.spin { width: 58px; height: 18px; border: 1px solid #aaa; display: flex; justify-content: flex-end; align-items: center; padding-right: 3px; gap: 6px; font-family: "Liberation Mono", monospace; }
.spin-arrows { width: 7px; height: 12px; background: linear-gradient(135deg, transparent 50%, #222 50%) 0 0 / 3.500px 4px no-repeat, linear-gradient(225deg, transparent 50%, #222 50%) 3.500px 0 / 3.500px 4px no-repeat, linear-gradient(45deg, transparent 50%, #222 50%) 0 8px / 3.500px 4px no-repeat, linear-gradient(315deg, transparent 50%, #222 50%) 3.500px 8px / 3.500px 4px no-repeat; }
.select { width: 108px; height: 20px; border: 1px solid #aaa; display: flex; align-items: center; justify-content: space-between; padding: 0 4px; background: #fff; }
.drop.dk { border-left-width: 4px; border-right-width: 4px; border-top-width: 5px; }
.ranges { display: grid; grid-template-columns: 78px 24px 80px 78px; grid-auto-rows: 18px; row-gap: 4px; padding: 4px 9px 0; font-size: 12px; }
.rl { display: flex; align-items: center; padding-bottom: 3px; }
.rn { font: 11px "Liberation Mono", monospace; display: flex; align-items: center; padding-left: 5px; padding-bottom: 2px; }
.sw { height: 20px; border: 1px solid #000; }
.c1 { background: #6633cc; }
.c2 { background: #0000ff; }
.c3 { background: #0099ff; }
.c4 { background: #00ffff; }
.c5 { background: #00ff00; }
.c6 { background: #ccff33; }
.c7 { background: #ffff00; }
.c8 { background: #ff9900; }
.fld { height: 18px; margin-left: 20px; background: #f0f0f0; border: 1px solid #e0e0e0; border-right: 3px solid #f0f0f0; box-shadow: 1px 0 0 #e0e0e0; display: flex; justify-content: flex-end; align-items: center; overflow: hidden; }
.fld b { font: 11px "Liberation Mono", monospace; letter-spacing: -.6px; color: #777; margin-right: -3px; white-space: nowrap; flex: none; }
.reset { display: flex; justify-content: space-between; align-items: center; padding: 2px 9px 0; font-size: 12px; }
.reset > span { padding-bottom: 2px; }
.reset-btn { width: 32px; height: 32px; padding: 0; background: #fff; border: 1px solid #aaa; display: flex; align-items: center; justify-content: center; }
.ret { width: 20px; height: 16px; }
.more { height: 17px; display: flex; align-items: center; justify-content: center; border-bottom: 1px solid #d0d0d0; width: 267px; }
.more-arrow { border-left: 5px solid transparent; border-right: 5px solid transparent; border-top: 5px solid #222; margin-left: 11px; }
.actions { display: flex; gap: 5px; margin-top: 8px; padding-left: 96px; }
.btn { width: 54px; height: 20px; padding: 0; background: #c8c8cc; border: 1px solid #aaa; font: 12px "Noto Sans CJK SC", sans-serif; color: #222; line-height: 18px; }
.primary { background: #9ccce8; border-color: #4a9fd4; }

/* overlays */
.redbox { position: absolute; left: 655px; top: 255px; width: 223px; height: 306px; border: 3px solid #ff2010; pointer-events: none; }
.watermark { position: absolute; left: 1176px; top: 602px; pointer-events: none; }
.wm-text { position: absolute; left: 1258px; top: 606px; width: 190px; display: flex; flex-direction: column; align-items: center; color: #fff; opacity: .6; pointer-events: none; }
.wm-big { font-size: 34px; line-height: 46px; font-weight: bold; letter-spacing: 2px; white-space: nowrap; }
.wm-small { font: 11px "Liberation Sans", sans-serif; letter-spacing: 3px; white-space: nowrap; }
```
